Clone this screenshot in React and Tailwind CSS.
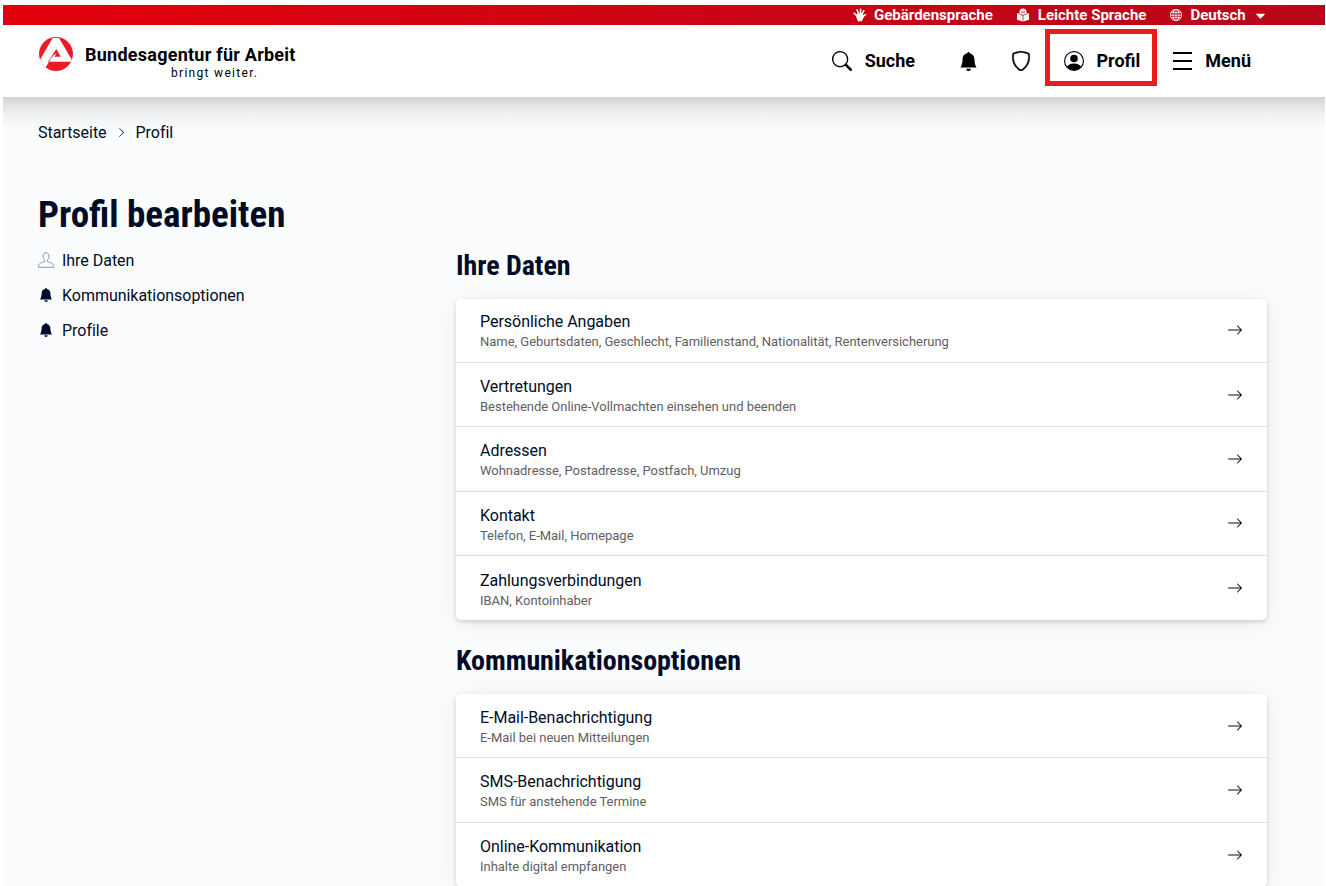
import {
  BsArrowRight,
  BsBellFill,
  BsChevronRight,
  BsGlobe,
  BsPersonCircle,
  BsSearch,
  BsShield,
} from "react-icons/bs";
import { FaCaretDown } from "react-icons/fa";

const sections = [
  {
    title: "Ihre Daten",
    items: [
      { title: "Persönliche Angaben", text: "Name, Geburtsdaten, Geschlecht, Familienstand, Nationalität, Rentenversicherung" },
      { title: "Vertretungen", text: "Bestehende Online-Vollmachten einsehen und beenden" },
      { title: "Adressen", text: "Wohnadresse, Postadresse, Postfach, Umzug" },
      { title: "Kontakt", text: "Telefon, E-Mail, Homepage" },
      { title: "Zahlungsverbindungen", text: "IBAN, Kontoinhaber" },
    ],
  },
  {
    title: "Kommunikationsoptionen",
    items: [
      { title: "E-Mail-Benachrichtigung", text: "E-Mail bei neuen Mitteilungen" },
      { title: "SMS-Benachrichtigung", text: "SMS für anstehende Termine" },
      { title: "Online-Kommunikation", text: "Inhalte digital empfangen" },
    ],
  },
];

function Logo() {
  return (
    <svg viewBox="0 0 34 34" className="h-[34px] w-[34px] shrink-0">
      <clipPath id="logo-circle">
        <circle cx="17" cy="17" r="17" />
      </clipPath>
      <g clipPath="url(#logo-circle)">
        <path d="M0 0h34v34H0z" fill="#ec1c24" />
        <path d="M13.600 1H20L34 24.800H10L6.800 30L0 34V24.500z" fill="#fff" />
        <path d="M17.300 12L21.800 19.800H15.500C16.200 18.400 16.800 17.400 17.600 16.500C14.600 17.500 12.500 20 9.900 25L9 25z" fill="#ec1c24" />
      </g>
    </svg>
  );
}

function HandIcon() {
  return (
    <svg viewBox="0 0 14 14" className="h-3.5 w-3.5" fill="none" stroke="white" strokeWidth="1.6" strokeLinecap="round">
      <path d="M1.200 5.200L4.600 8.500M4 1.800L6 7M7.600 1.200L7.400 7M10.800 2.600L8.500 7.200M12.600 6.500L9.300 9.200" />
      <path d="M4.500 6.500L9.200 6.200L10 9L8.400 12.200L5.500 12.700L4 9z" fill="white" />
    </svg>
  );
}

function ReaderIcon() {
  return (
    <svg viewBox="0 0 14 14" className="h-3.5 w-3.5" fill="white">
      <path d="M3.500 4a3.500 3.500 0 0 1 7 0v1.700L13 5.300v6.500L7 13.500L1 11.800V5.300l2.500.4z" />
      <path d="M5 4.200h4M7 7.200v5.500M3.500 6L7 7.300L10.500 6" fill="none" stroke="#c90612" strokeWidth=".8" />
    </svg>
  );
}

function PersonIcon() {
  return (
    <svg viewBox="0 0 16 16" className="h-4 w-4" fill="none" stroke="#9097a3">
      <path d="M8 .8c-1.900 0-2.900 1.400-2.900 3.200 0 2 .8 3.400 1.600 4.200v1.500C4.500 10.400.6 11.200.6 13.600v1.700h14.800v-1.700c0-2.400-3.900-3.200-6.100-3.900V8.200c.8-.8 1.600-2.200 1.600-4.200C10.900 2.200 9.900.8 8 .8z" />
    </svg>
  );
}

function Section({ title, items }) {
  return (
    <section>
      <h2 className="font-['Roboto_Condensed'] text-[28px] leading-8 font-bold tracking-[-0.05px]">{title}</h2>
      <ul className="mt-[16.5px] rounded-[5px] bg-white shadow-[0_2px_4px_rgba(0,0,0,0.16),0_3px_26px_rgba(0,0,0,0.07)]">
        {items.map((item) => (
          <li
            key={item.title}
            className="flex h-[64.4px] items-center justify-between border-b border-[#dcdfe1] px-6 last:border-0"
          >
            <div className="pt-[4.5px]">
              <p className="text-base leading-5 tracking-[-0.03px]">{item.title}</p>
              <p className="text-[13px] leading-5 tracking-[-0.02px] text-[#5f6063]">{item.text}</p>
            </div>
            <BsArrowRight size={16} />
          </li>
        ))}
      </ul>
    </section>
  );
}

export default function App() {
  return (
    <div className="h-[886px] overflow-hidden bg-white pt-[5px] pr-px pl-[3px] font-['Roboto',sans-serif] text-[#000c26]">
      <div className="flex h-5 items-center bg-linear-to-r from-[#e2000a] to-[#b8071a] pl-[850px] text-[15px] font-bold text-white">
        <HandIcon />
        <span className="ml-[7px]">Gebärdensprache</span>
        <span className="ml-[23px]"><ReaderIcon /></span>
        <span className="ml-2">Leichte Sprache</span>
        <BsGlobe size={12} className="ml-6" />
        <span className="ml-2">Deutsch</span>
        <FaCaretDown size={15} className="ml-[7px]" />
      </div>

      <header className="flex h-[72px] bg-white pl-9 text-black">
        <div className="flex pt-3">
          <Logo />
          <div className="ml-3 pt-2">
            <p className="text-[18px] leading-5 font-bold tracking-[0.25px]">Bundesagentur für Arbeit</p>
            <p className="ml-[86px] text-[12px] leading-4 tracking-[1.3px]">bringt weiter.</p>
          </div>
        </div>
        <nav className="ml-auto flex items-center pr-[74px] text-lg font-bold">
          <BsSearch size={20} />
          <span className="ml-[13px]">Suche</span>
          <BsBellFill size={19} className="ml-[43.5px]" />
          <BsShield size={20} strokeWidth={0.4} className="ml-[33px]" />
          <div className="relative ml-[33px] flex items-center">
            <div className="absolute -top-[18px] -left-[19px] h-[57px] w-28 border-[5px] border-[#e91c1f]" />
            <BsPersonCircle size={20} />
            <span className="ml-[13px]">Profil</span>
          </div>
          <svg viewBox="0 0 20 18" className="ml-[33px] h-[18px] w-5" stroke="black" strokeWidth="2">
            <path d="M0 1h19M0 9h19M0 17h19" />
          </svg>
          <span className="ml-3">Menü</span>
        </nav>
      </header>

      <main className="h-[789px] bg-[#fafcfe] bg-[linear-gradient(#d2d4d4,#dfe1e2_7px,#f0f2f3_18px,#fafcfe_34px)] pt-[26px] pl-[35px]">
        <div className="flex items-center text-base leading-5 tracking-[-0.03px]">
          <span>Startseite</span>
          <BsChevronRight size={11} className="mx-[9px] mb-px" />
          <span>Profil</span>
        </div>
        <h1 className="mt-[49px] font-['Roboto_Condensed'] text-[37px] leading-[46px] font-bold">Profil bearbeiten</h1>
        <div className="flex">
          <aside className="w-[418px] space-y-[15px] pt-[13px] text-base leading-5 tracking-[-0.03px]">
            <div className="flex items-center gap-2"><span className="mb-0.5"><PersonIcon /></span>Ihre Daten</div>
            <div className="flex items-center gap-2"><BsBellFill size={14} className="mx-px mb-0.5" />Kommunikationsoptionen</div>
            <div className="flex items-center gap-2"><BsBellFill size={14} className="mx-px mb-0.5" />Profile</div>
          </aside>
          <div className="w-[811px] space-y-[25px] pt-3">
            {sections.map((section) => (
              <Section key={section.title} {...section} />
            ))}
          </div>
        </div>
      </main>
    </div>
  );
}
